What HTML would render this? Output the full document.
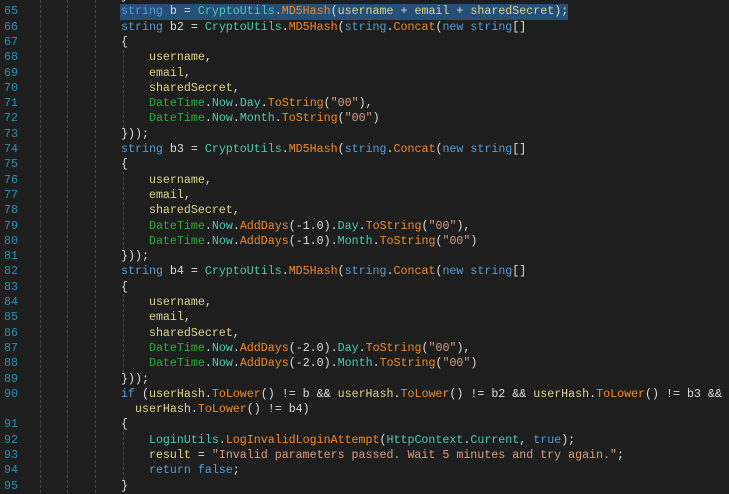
<!DOCTYPE html>
<html><head><style>
body{margin:0;background:#1e1e1e;width:729px;height:493px;overflow:hidden;position:relative;font-family:"Liberation Mono",monospace;font-size:11.65px;}
.l{position:absolute;left:0;height:15.3px;line-height:15.3px;white-space:pre;color:#dcdcdc;width:729px}
.n{position:absolute;left:4px;color:#2b91af;}
.c{position:absolute;left:121px;}
.k{color:#569cd6}.t{color:#4ec9b0}.m{color:#ee8a2c}.p{color:#dcd58c}.g{color:#2eab3f}.s{color:#d69d85}
.gd{position:absolute;width:0;border-left:1px dashed;}
.sel{position:absolute;left:120px;top:4px;width:448px;height:16px;background:#264f78}
</style></head><body>
<div class="gd" style="left:40px;top:0;height:493px;border-color:#4a4a4a"></div>
<div class="gd" style="left:67px;top:0;height:493px;border-color:#2f5a4a"></div>
<div class="gd" style="left:95px;top:0;height:493px;border-color:#2f4a6a"></div>
<div class="gd" style="left:123px;top:50px;height:78px;border-color:#4a4a4a"></div>
<div class="gd" style="left:123px;top:172px;height:78px;border-color:#4a4a4a"></div>
<div class="gd" style="left:123px;top:294px;height:78px;border-color:#4a4a4a"></div>
<div class="gd" style="left:123px;top:432px;height:48px;border-color:#4a4a4a"></div>
<div class="sel"></div>
<div class="l" style="top:-11px"><span class="n"></span><span class="c">}</span></div>
<div class="l" style="top:4.3px"><span class="n">65</span><span class="c"><span class="k">string</span> b = <span class="t">CryptoUtils</span>.<span class="m">MD5Hash</span>(<span class="p">username</span> + <span class="p">email</span> + <span class="p">sharedSecret</span>);</span></div>
<div class="l" style="top:19.6px"><span class="n">66</span><span class="c"><span class="k">string</span> b2 = <span class="t">CryptoUtils</span>.<span class="m">MD5Hash</span>(<span class="k">string</span>.<span class="m">Concat</span>(<span class="k">new string</span>[]</span></div>
<div class="l" style="top:34.9px"><span class="n">67</span><span class="c">{</span></div>
<div class="l" style="top:50.2px"><span class="n">68</span><span class="c">    <span class="p">username</span>,</span></div>
<div class="l" style="top:65.5px"><span class="n">69</span><span class="c">    <span class="p">email</span>,</span></div>
<div class="l" style="top:80.8px"><span class="n">70</span><span class="c">    <span class="p">sharedSecret</span>,</span></div>
<div class="l" style="top:96.1px"><span class="n">71</span><span class="c">    <span class="g">DateTime</span>.<span class="t">Now</span>.<span class="t">Day</span>.<span class="m">ToString</span>(<span class="s">"00"</span>),</span></div>
<div class="l" style="top:111.4px"><span class="n">72</span><span class="c">    <span class="g">DateTime</span>.<span class="t">Now</span>.<span class="t">Month</span>.<span class="m">ToString</span>(<span class="s">"00"</span>)</span></div>
<div class="l" style="top:126.7px"><span class="n">73</span><span class="c">}));</span></div>
<div class="l" style="top:142px"><span class="n">74</span><span class="c"><span class="k">string</span> b3 = <span class="t">CryptoUtils</span>.<span class="m">MD5Hash</span>(<span class="k">string</span>.<span class="m">Concat</span>(<span class="k">new string</span>[]</span></div>
<div class="l" style="top:157.3px"><span class="n">75</span><span class="c">{</span></div>
<div class="l" style="top:172.6px"><span class="n">76</span><span class="c">    <span class="p">username</span>,</span></div>
<div class="l" style="top:187.9px"><span class="n">77</span><span class="c">    <span class="p">email</span>,</span></div>
<div class="l" style="top:203.2px"><span class="n">78</span><span class="c">    <span class="p">sharedSecret</span>,</span></div>
<div class="l" style="top:218.5px"><span class="n">79</span><span class="c">    <span class="g">DateTime</span>.<span class="t">Now</span>.<span class="m">AddDays</span>(-1.0).<span class="t">Day</span>.<span class="m">ToString</span>(<span class="s">"00"</span>),</span></div>
<div class="l" style="top:233.8px"><span class="n">80</span><span class="c">    <span class="g">DateTime</span>.<span class="t">Now</span>.<span class="m">AddDays</span>(-1.0).<span class="t">Month</span>.<span class="m">ToString</span>(<span class="s">"00"</span>)</span></div>
<div class="l" style="top:249.1px"><span class="n">81</span><span class="c">}));</span></div>
<div class="l" style="top:264.4px"><span class="n">82</span><span class="c"><span class="k">string</span> b4 = <span class="t">CryptoUtils</span>.<span class="m">MD5Hash</span>(<span class="k">string</span>.<span class="m">Concat</span>(<span class="k">new string</span>[]</span></div>
<div class="l" style="top:279.7px"><span class="n">83</span><span class="c">{</span></div>
<div class="l" style="top:295px"><span class="n">84</span><span class="c">    <span class="p">username</span>,</span></div>
<div class="l" style="top:310.3px"><span class="n">85</span><span class="c">    <span class="p">email</span>,</span></div>
<div class="l" style="top:325.6px"><span class="n">86</span><span class="c">    <span class="p">sharedSecret</span>,</span></div>
<div class="l" style="top:340.9px"><span class="n">87</span><span class="c">    <span class="g">DateTime</span>.<span class="t">Now</span>.<span class="m">AddDays</span>(-2.0).<span class="t">Day</span>.<span class="m">ToString</span>(<span class="s">"00"</span>),</span></div>
<div class="l" style="top:356.2px"><span class="n">88</span><span class="c">    <span class="g">DateTime</span>.<span class="t">Now</span>.<span class="m">AddDays</span>(-2.0).<span class="t">Month</span>.<span class="m">ToString</span>(<span class="s">"00"</span>)</span></div>
<div class="l" style="top:371.5px"><span class="n">89</span><span class="c">}));</span></div>
<div class="l" style="top:386.8px"><span class="n">90</span><span class="c"><span class="k">if</span> (<span class="p">userHash</span>.<span class="m">ToLower</span>() != b &amp;&amp; <span class="p">userHash</span>.<span class="m">ToLower</span>() != b2 &amp;&amp; <span class="p">userHash</span>.<span class="m">ToLower</span>() != b3 &amp;&amp;</span></div>
<div class="l" style="top:402.1px"><span class="n"></span><span class="c">  <span class="p">userHash</span>.<span class="m">ToLower</span>() != b4)</span></div>
<div class="l" style="top:417.4px"><span class="n">91</span><span class="c">{</span></div>
<div class="l" style="top:432.7px"><span class="n">92</span><span class="c">    <span class="t">LoginUtils</span>.<span class="m">LogInvalidLoginAttempt</span>(<span class="t">HttpContext</span>.<span class="t">Current</span>, <span class="k">true</span>);</span></div>
<div class="l" style="top:448px"><span class="n">93</span><span class="c">    <span class="p">result</span> = <span class="s">"Invalid parameters passed. Wait 5 minutes and try again."</span>;</span></div>
<div class="l" style="top:463.3px"><span class="n">94</span><span class="c">    <span class="k">return false</span>;</span></div>
<div class="l" style="top:478.6px"><span class="n">95</span><span class="c">}</span></div>
</body></html>
